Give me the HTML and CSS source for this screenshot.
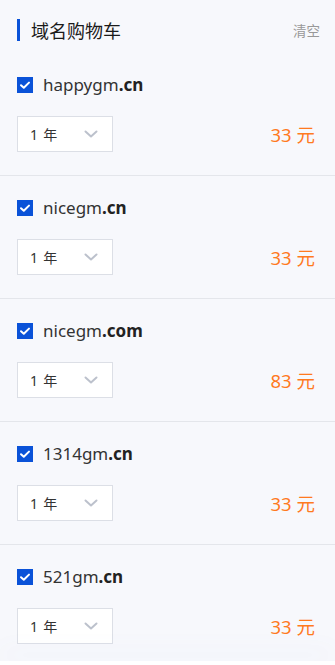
FILE: index.html
```html
<!DOCTYPE html>
<html lang="zh-CN">
<head>
<meta charset="utf-8">
<title>域名购物车</title>
<link rel="stylesheet" href="styles.css">
</head>
<body>
<div class="cart">
  <div class="cart-head">
    <h1 class="cart-title">域名购物车</h1>
    <span class="cart-clear">清空</span>
  </div>

  <div class="item">
    <div class="item-row">
      <span class="check"><svg viewBox="0 0 16 16" width="16" height="16"><path d="M4 8.2 L6.8 10.8 L12 5.6" fill="none" stroke="#fff" stroke-width="2" stroke-linecap="round" stroke-linejoin="round"/></svg></span>
      <span class="domain">happygm<b>.cn</b></span>
    </div>
    <div class="item-bottom">
      <div class="select"><span class="period"><span class="num">1</span> 年</span><svg class="chev" viewBox="0 0 14 8" width="14" height="8"><path d="M1.5 1.5 L7 6.5 L12.5 1.5" fill="none" stroke="#bcc1cc" stroke-width="2" stroke-linecap="round" stroke-linejoin="round"/></svg></div>
      <span class="price">33 元</span>
    </div>
  </div>

  <div class="item">
    <div class="item-row">
      <span class="check"><svg viewBox="0 0 16 16" width="16" height="16"><path d="M4 8.2 L6.8 10.8 L12 5.6" fill="none" stroke="#fff" stroke-width="2" stroke-linecap="round" stroke-linejoin="round"/></svg></span>
      <span class="domain">nicegm<b>.cn</b></span>
    </div>
    <div class="item-bottom">
      <div class="select"><span class="period"><span class="num">1</span> 年</span><svg class="chev" viewBox="0 0 14 8" width="14" height="8"><path d="M1.5 1.5 L7 6.5 L12.5 1.5" fill="none" stroke="#bcc1cc" stroke-width="2" stroke-linecap="round" stroke-linejoin="round"/></svg></div>
      <span class="price">33 元</span>
    </div>
  </div>

  <div class="item">
    <div class="item-row">
      <span class="check"><svg viewBox="0 0 16 16" width="16" height="16"><path d="M4 8.2 L6.8 10.8 L12 5.6" fill="none" stroke="#fff" stroke-width="2" stroke-linecap="round" stroke-linejoin="round"/></svg></span>
      <span class="domain">nicegm<b>.com</b></span>
    </div>
    <div class="item-bottom">
      <div class="select"><span class="period"><span class="num">1</span> 年</span><svg class="chev" viewBox="0 0 14 8" width="14" height="8"><path d="M1.5 1.5 L7 6.5 L12.5 1.5" fill="none" stroke="#bcc1cc" stroke-width="2" stroke-linecap="round" stroke-linejoin="round"/></svg></div>
      <span class="price">83 元</span>
    </div>
  </div>

  <div class="item">
    <div class="item-row">
      <span class="check"><svg viewBox="0 0 16 16" width="16" height="16"><path d="M4 8.2 L6.8 10.8 L12 5.6" fill="none" stroke="#fff" stroke-width="2" stroke-linecap="round" stroke-linejoin="round"/></svg></span>
      <span class="domain">1314gm<b>.cn</b></span>
    </div>
    <div class="item-bottom">
      <div class="select"><span class="period"><span class="num">1</span> 年</span><svg class="chev" viewBox="0 0 14 8" width="14" height="8"><path d="M1.5 1.5 L7 6.5 L12.5 1.5" fill="none" stroke="#bcc1cc" stroke-width="2" stroke-linecap="round" stroke-linejoin="round"/></svg></div>
      <span class="price">33 元</span>
    </div>
  </div>

  <div class="item">
    <div class="item-row">
      <span class="check"><svg viewBox="0 0 16 16" width="16" height="16"><path d="M4 8.2 L6.8 10.8 L12 5.6" fill="none" stroke="#fff" stroke-width="2" stroke-linecap="round" stroke-linejoin="round"/></svg></span>
      <span class="domain">521gm<b>.cn</b></span>
    </div>
    <div class="item-bottom">
      <div class="select"><span class="period"><span class="num">1</span> 年</span><svg class="chev" viewBox="0 0 14 8" width="14" height="8"><path d="M1.5 1.5 L7 6.5 L12.5 1.5" fill="none" stroke="#bcc1cc" stroke-width="2" stroke-linecap="round" stroke-linejoin="round"/></svg></div>
      <span class="price">33 元</span>
    </div>
  </div>
</div>
<div class="bottom-shade"></div>
</body>
</html>
```

FILE: styles.css
```css
html, body {
  margin: 0;
  padding: 0;
  background: #f7f8fc;
  font-family: "Noto Sans", "Noto Sans CJK SC", sans-serif;
  color: #333;
}

.cart {
  display: flex;
  flex-direction: column;
}

.cart-head {
  display: flex;
  align-items: center;
  justify-content: space-between;
  padding: 19px 15px 12px 17px;
}

.cart-title {
  margin: 0;
  height: 22px;
  line-height: 22px;
  font-size: 18px;
  font-weight: 400;
  color: #1a1a1a;
  border-left: 3px solid #0a52d8;
  padding-left: 11px;
  font-family: "Noto Sans CJK SC", sans-serif;
}

.cart-clear {
  font-size: 13.5px;
  color: #999;
  font-family: "Noto Sans CJK SC", sans-serif;
}

.item {
  display: flex;
  flex-direction: column;
  gap: 19px;
  padding: 20px 20px 23px 17px;
  border-bottom: 1px solid #e4e6eb;
}

.item-row {
  display: flex;
  align-items: center;
  gap: 10px;
  height: 24px;
}

.check {
  width: 16px;
  height: 16px;
  background: #0a52d8;
  display: flex;
  flex: none;
}

.domain {
  font-size: 17px;
  line-height: 22px;
  color: #333;
  margin-top: -1px;
}

.domain b {
  font-weight: 700;
  color: #222;
}

.item-bottom {
  display: flex;
  align-items: center;
  justify-content: space-between;
}

.select {
  box-sizing: border-box;
  width: 96px;
  height: 36px;
  background: #fff;
  border: 1px solid #dcdfe6;
  display: flex;
  align-items: center;
  justify-content: space-between;
  padding: 0 14px 0 12px;
  font-size: 14px;
  color: #333;
  font-family: "Noto Sans CJK SC", sans-serif;
}

.period {
  white-space: pre;
}

.num {
  font-family: "Noto Sans", sans-serif;
  padding-right: 2px;
}

.chev {
  display: block;
}

.price {
  font-size: 18.5px;
  color: #ff7a1f;
  font-family: "Noto Sans", "Noto Sans CJK SC", sans-serif;
}

.bottom-shade {
  position: fixed;
  left: 0;
  right: 0;
  bottom: 0;
  height: 4px;
  background: #fff;
  box-shadow: 0 -8px 24px rgba(120, 140, 200, 0.12);
}
```
